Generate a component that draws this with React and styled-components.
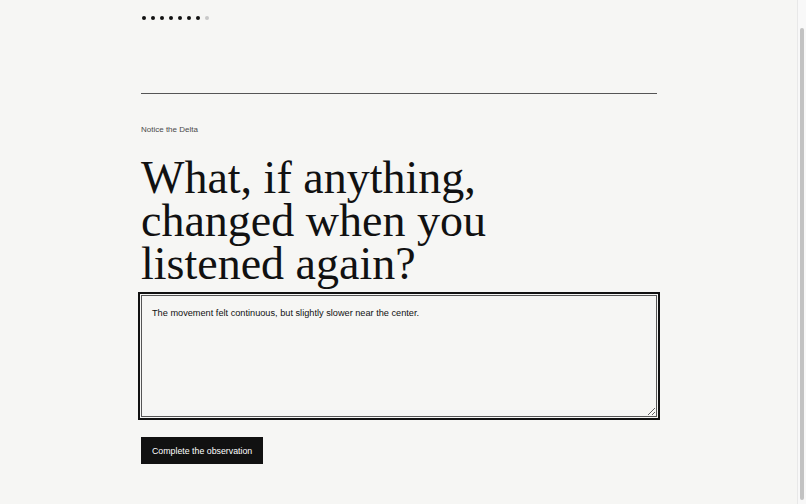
import React, { useEffect, useRef, useState } from "react";
import styled, { createGlobalStyle } from "styled-components";

const Global = createGlobalStyle`
  html { background: #f6f6f4; }
  body {
    margin: 0;
    padding-right: 8px;
    background: #f6f6f4;
    color: #111;
    font-family: "Liberation Sans", Arial, sans-serif;
  }
`;

const Page = styled.main`
  max-width: 516px;
  margin: 0 auto;
  padding: 16px 0 36px;
  display: flex;
  flex-direction: column;
`;

const Progress = styled.div`
  display: flex;
  gap: 5px;
  padding-left: 0.5px;
`;

const Dot = styled.span`
  width: 4px;
  height: 4px;
  border-radius: 50%;
  background: ${(p) => (p.$done ? "#111" : "#c8c8c8")};
`;

const Rule = styled.hr`
  margin: 73px 0 0;
  border: 0;
  border-top: 1px solid #555;
`;

const Eyebrow = styled.p`
  margin: 31px 0 0;
  font-size: 8px;
  color: #4a4a4a;
  line-height: 10px;
`;

const Heading = styled.h1`
  margin: 21px 0 0;
  max-width: 400px;
  font-family: "Liberation Serif", "Times New Roman", serif;
  font-weight: 400;
  font-size: 46px;
  line-height: 43px;
  color: #111;
`;

const Answer = styled.textarea`
  margin-top: 10px;
  box-sizing: border-box;
  width: 100%;
  height: 122px;
  padding: 10px 10px;
  border: 1px solid #555;
  outline: 2px solid #111;
  outline-offset: 1px;
  background: #f6f6f4;
  color: #111;
  font-family: "Liberation Sans", Arial, sans-serif;
  font-size: 9.2px;
  line-height: 14px;
  resize: vertical;
  &:focus { outline: 2px solid #111; outline-offset: 1px; }
`;

const Submit = styled.button`
  align-self: flex-start;
  margin-top: 20px;
  height: 27px;
  padding: 0 11px;
  border: 0;
  background: #111;
  color: #fff;
  font-family: "Liberation Sans", Arial, sans-serif;
  font-size: 8.8px;
  cursor: pointer;
`;

const ScrollTrack = styled.div`
  position: fixed;
  top: 0;
  right: 0;
  bottom: 0;
  width: 8px;
  background: #f8f8f8;
  border-left: 1px solid #e8e8e8;
`;

const ScrollThumb = styled.div`
  position: absolute;
  top: 28px;
  bottom: 4px;
  left: 2px;
  width: 4px;
  border-radius: 2px;
  background: #c2c2c2;
`;

export default function App() {
  const [text, setText] = useState(
    "The movement felt continuous, but slightly slower near the center."
  );
  const ref = useRef(null);
  useEffect(() => {
    const el = ref.current;
    if (el) {
      el.focus();
      el.setSelectionRange(el.value.length, el.value.length);
    }
  }, []);
  return (
    <>
      <Global />
      <Page>
        <Progress>
          {Array.from({ length: 8 }).map((_, i) => (
            <Dot key={i} $done={i < 7} />
          ))}
        </Progress>
        <Rule />
        <Eyebrow>Notice the Delta</Eyebrow>
        <Heading>What, if anything, changed when you listened again?</Heading>
        <Answer ref={ref} value={text} onChange={(e) => setText(e.target.value)} />
        <Submit>Complete the observation</Submit>
      </Page>
      <ScrollTrack aria-hidden="true">
        <ScrollThumb />
      </ScrollTrack>
    </>
  );
}
